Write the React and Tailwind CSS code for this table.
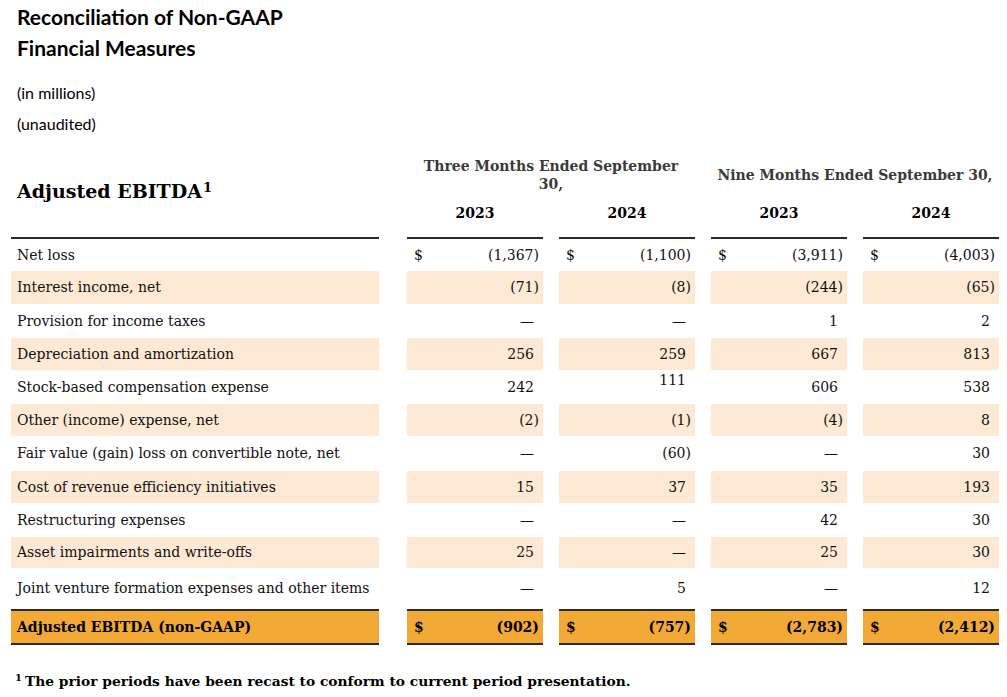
import React from 'react'

const serif = { fontFamily: '"DejaVu Serif", "Liberation Serif", serif' }

const rows = [
  { label: 'Net loss', h: 'h-[32px]', dollar: true, vals: ['(1,367)', '(1,100)', '(3,911)', '(4,003)'] },
  { label: 'Interest income, net', h: 'h-[33px]', band: true, vals: ['(71)', '(8)', '(244)', '(65)'] },
  { label: 'Provision for income taxes', h: 'h-[34px]', vals: ['—', '—', '1', '2'] },
  { label: 'Depreciation and amortization', h: 'h-[32px]', band: true, vals: ['256', '259', '667', '813'] },
  { label: 'Stock-based compensation expense', h: 'h-[34px]', vals: ['242', '111', '606', '538'], raised: 1 },
  { label: 'Other (income) expense, net', h: 'h-[32px]', band: true, vals: ['(2)', '(1)', '(4)', '8'] },
  { label: 'Fair value (gain) loss on convertible note, net', h: 'h-[35px]', vals: ['—', '(60)', '—', '30'] },
  { label: 'Cost of revenue efficiency initiatives', h: 'h-[32px]', band: true, vals: ['15', '37', '35', '193'] },
  { label: 'Restructuring expenses', h: 'h-[34px]', vals: ['—', '—', '42', '30'] },
  { label: 'Asset impairments and write-offs', h: 'h-[31px]', band: true, vals: ['25', '—', '25', '30'] },
  { label: 'Joint venture formation expenses and other items', h: 'h-[41px]', vals: ['—', '5', '—', '12'] },
]

function ValueCell({ value, dollar, bg, raised }) {
  const paren = value.startsWith('(')
  return (
    <div className={`w-[136px] h-full flex items-center justify-between ${bg}`}>
      <span className="pl-[7px]">{dollar ? '$' : ''}</span>
      <span className={`${paren ? 'pr-[4px]' : 'pr-[9px]'} ${raised ? 'relative -top-[7px]' : ''}`}>
        {value}
      </span>
    </div>
  )
}

function Row({ row }) {
  const bg = row.band ? 'bg-[#FDE9D4]' : ''
  return (
    <div className={`flex ${row.h} text-[14px] text-[#111]`} style={serif}>
      <div className={`ml-[11px] w-[368px] h-full flex items-center pl-[6px] ${bg}`}>{row.label}</div>
      <div className="ml-[28px] flex gap-[16px] h-full">
        {row.vals.map((v, i) => (
          <ValueCell key={i} value={v} dollar={row.dollar} bg={bg} raised={row.raised === i} />
        ))}
      </div>
    </div>
  )
}

export default function App() {
  const rule = 'h-[2px] bg-[#2a2a2a]'
  return (
    <div className="w-[1007px] h-[697px] bg-white overflow-hidden text-black">
      {/* Title */}
      <div className="pl-[17px] pt-[1px] h-[140px]" style={{ fontFamily: 'Lato, "Liberation Sans", sans-serif' }}>
        <div className="text-[21px] leading-[31px] font-bold">Reconciliation of Non-GAAP</div>
        <div className="text-[21px] leading-[31px] font-bold">Financial Measures</div>
        <div className="mt-[14px] text-[16px] leading-[31px]">(in millions)</div>
        <div className="text-[16px] leading-[31px]">(unaudited)</div>
      </div>

      {/* Column headers */}
      <div className="flex h-[97px]" style={serif}>
        <div className="ml-[11px] w-[368px] pl-[6px] pt-[37px] text-[19px] leading-[28px] font-bold">
          Adjusted EBITDA<sup className="text-[13px] ml-[1px]">1</sup>
        </div>
        <div className="ml-[28px] flex gap-[16px] pt-[11px]">
          <div className="w-[288px] flex flex-col">
            <div className="h-[48px] flex items-center justify-center text-center text-[14px] leading-[18px] font-bold text-[#3a3a3a]">
              Three Months Ended September
              <br />
              30,
            </div>
            <div className="h-[28px] flex gap-[16px] text-[14px] font-bold">
              <div className="w-[136px] flex items-center justify-center">2023</div>
              <div className="w-[136px] flex items-center justify-center">2024</div>
            </div>
          </div>
          <div className="w-[288px] flex flex-col">
            <div className="h-[48px] flex items-center justify-center text-center text-[14px] leading-[18px] font-bold text-[#3a3a3a]">
              Nine Months Ended September 30,
            </div>
            <div className="h-[28px] flex gap-[16px] text-[14px] font-bold">
              <div className="w-[136px] flex items-center justify-center">2023</div>
              <div className="w-[136px] flex items-center justify-center">2024</div>
            </div>
          </div>
        </div>
      </div>

      {/* Header rule */}
      <div className="flex">
        <div className={`ml-[11px] w-[368px] ${rule}`} />
        <div className="ml-[28px] flex gap-[16px]">
          {[0, 1, 2, 3].map((i) => (
            <div key={i} className={`w-[136px] ${rule}`} />
          ))}
        </div>
      </div>

      {rows.map((row) => (
        <Row key={row.label} row={row} />
      ))}

      {/* Total row */}
      <div className="flex h-[36px] text-[14px] font-bold" style={serif}>
        <div className="ml-[11px] w-[368px] flex items-center pl-[6px] bg-[#F2A935] border-y-2 border-[#2a2a2a]">
          Adjusted EBITDA (non-GAAP)
        </div>
        <div className="ml-[28px] flex gap-[16px]">
          {['(902)', '(757)', '(2,783)', '(2,412)'].map((v) => (
            <div key={v} className="w-[136px] flex items-center justify-between bg-[#F2A935] border-y-2 border-[#2a2a2a]">
              <span className="pl-[7px]">$</span>
              <span className="pr-[4px]">{v}</span>
            </div>
          ))}
        </div>
      </div>

      {/* Footnote */}
      <div className="pl-[15px] mt-[24px] text-[13.8px] font-bold leading-[24px]" style={serif}>
        <sup className="text-[10px] mr-[3px]">1</sup>The prior periods have been recast to conform to current period presentation.
      </div>
    </div>
  )
}
